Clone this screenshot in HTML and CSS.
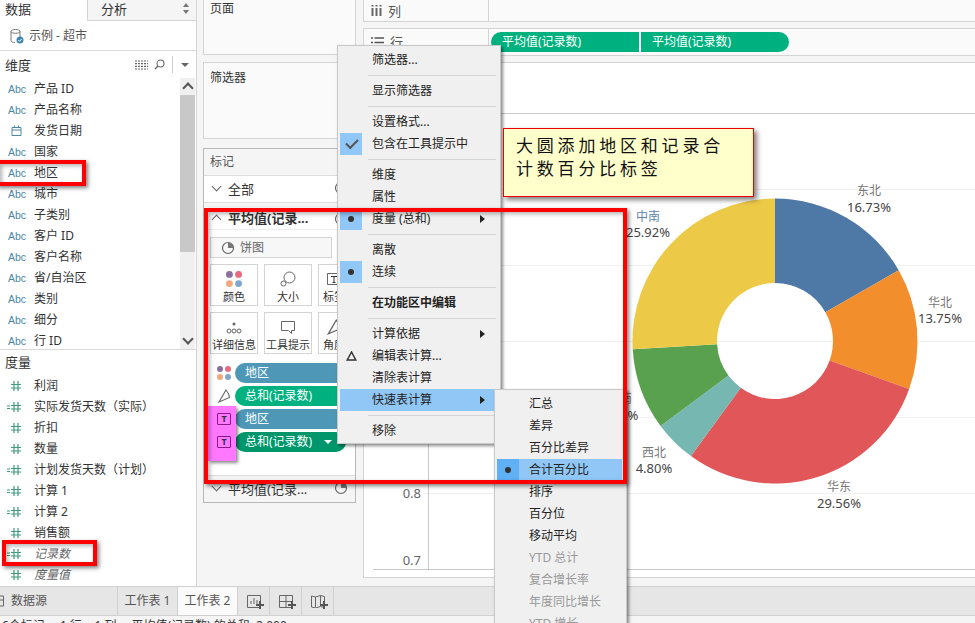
FILE: index.html
```html
<!DOCTYPE html>
<html lang="zh-CN">
<head>
    <meta charset="UTF-8">
    <meta name="viewport" content="width=device-width, initial-scale=1.0">
    <title>工作表 2</title>
    <link rel="stylesheet" href="styles.css">
</head>
<body>
    <svg class="sprite" width="0" height="0">
        <symbol id="num" viewBox="0 0 22 12">
            <path d="M14 1v10M18 1v10M11 4.5h10M11 8h10" fill="none" stroke="#3f9b7d" stroke-width="1.2"/>
        </symbol>
        <symbol id="num-calc" viewBox="0 0 22 12">
            <path d="M14 1v10M18 1v10M11 4.5h10M11 8h10M7 5h3M7 7.5h3" fill="none" stroke="#3f9b7d" stroke-width="1.2"/>
        </symbol>
        <symbol id="pie" viewBox="0 0 14 14">
            <circle cx="7" cy="7" r="5.5" fill="none" stroke="#666" stroke-width="1.2"/>
            <path d="M7 7V1.5A5.5 5.5 0 0 1 12.5 7z" fill="#777"/>
        </symbol>
        <symbol id="dots" viewBox="0 0 14 14">
            <circle cx="3" cy="3" r="3" fill="#8b6f9e"/>
            <circle cx="11" cy="3" r="3" fill="#ea6b80"/>
            <circle cx="3" cy="11" r="3" fill="#f2a77c"/>
            <circle cx="11" cy="11" r="3" fill="#7ea6cf"/>
        </symbol>
        <symbol id="angle" viewBox="0 0 14 14">
            <path d="M2 13L9 1q3 3.5 3.5 7.5z" fill="none" stroke="#666" stroke-width="1.1"/>
        </symbol>
        <symbol id="plus" viewBox="0 0 8 8">
            <path d="M4 0v8M0 4h8" stroke="#555" stroke-width="2"/>
        </symbol>
    </svg>

    <div class="app">
        <div class="workspace">
            <aside class="data-pane">
                <div class="pane-tabs">
                    <span class="pane-tab active">数据</span>
                    <span class="pane-tab">分析<i class="updown"></i></span>
                </div>
                <div class="source-row">
                    <svg width="16" height="16" viewBox="0 0 16 16">
                        <path d="M2 3.5C2 .8 11 .8 11 3.5V9M2 3.5c0 2.4 9 2.4 9 0M2 3.5v9c0 1.3 2 2 4 2" fill="none" stroke="#777" stroke-width="1"/>
                        <circle cx="11" cy="12" r="3.5" fill="#3d87b5"/>
                        <path d="M9.3 12l1.3 1.3 2-2.3" fill="none" stroke="#fff" stroke-width="1"/>
                    </svg>
                    <span>示例 - 超市</span>
                </div>
                <div class="field-head dim-head">
                    <span>维度</span>
                    <div class="head-tools">
                        <svg width="13" height="10" viewBox="0 0 13 10">
                            <path d="M0 1h13M0 3.7h13M0 6.3h13M0 9h13" stroke="#666" stroke-dasharray="2 1" stroke-width="1.2"/>
                        </svg>
                        <svg width="11" height="11" viewBox="0 0 11 11">
                            <circle cx="6.5" cy="4.5" r="3.5" fill="none" stroke="#666" stroke-width="1.1"/>
                            <path d="M4 7L1 10" stroke="#666" stroke-width="1.4"/>
                        </svg>
                        <i class="tool-rule"></i>
                        <i class="tool-caret"></i>
                    </div>
                </div>
                <div class="dim-body">
                    <ul class="field-list">
                        <li><span class="type abc">Abc</span>产品 ID</li>
                        <li><span class="type abc">Abc</span>产品名称</li>
                        <li><span class="type"><svg class="date" width="11" height="11" viewBox="0 0 11 11"><path d="M1 2.5h9v8H1zM1 5h9M3.5 .5v2M7.5 .5v2" fill="none" stroke="#4b86a6"/></svg></span>发货日期</li>
                        <li><span class="type abc">Abc</span>国家</li>
                        <li><span class="type abc">Abc</span>地区</li>
                        <li><span class="type abc">Abc</span>城市</li>
                        <li><span class="type abc">Abc</span>子类别</li>
                        <li><span class="type abc">Abc</span>客户 ID</li>
                        <li><span class="type abc">Abc</span>客户名称</li>
                        <li><span class="type abc">Abc</span>省/自治区</li>
                        <li><span class="type abc">Abc</span>类别</li>
                        <li><span class="type abc">Abc</span>细分</li>
                        <li><span class="type abc">Abc</span>行 ID</li>
                    </ul>
                    <div class="scrollbar">
                        <span class="scroll-btn up"></span>
                        <span class="scroll-thumb"></span>
                        <span class="scroll-btn down"></span>
                    </div>
                </div>
                <div class="field-head measure-head">度量</div>
                <ul class="field-list">
                    <li><span class="type"><svg width="22" height="12"><use href="#num"/></svg></span>利润</li>
                    <li><span class="type"><svg width="22" height="12"><use href="#num-calc"/></svg></span>实际发货天数（实际）</li>
                    <li><span class="type"><svg width="22" height="12"><use href="#num"/></svg></span>折扣</li>
                    <li><span class="type"><svg width="22" height="12"><use href="#num"/></svg></span>数量</li>
                    <li><span class="type"><svg width="22" height="12"><use href="#num-calc"/></svg></span>计划发货天数（计划）</li>
                    <li><span class="type"><svg width="22" height="12"><use href="#num-calc"/></svg></span>计算 1</li>
                    <li><span class="type"><svg width="22" height="12"><use href="#num-calc"/></svg></span>计算 2</li>
                    <li><span class="type"><svg width="22" height="12"><use href="#num"/></svg></span>销售额</li>
                    <li class="generated"><span class="type"><svg width="22" height="12"><use href="#num-calc"/></svg></span><em>记录数</em></li>
                    <li class="generated"><span class="type"><svg width="22" height="12"><use href="#num"/></svg></span><em>度量值</em></li>
                </ul>
            </aside>

            <section class="cards-col">
                <div class="card page-card">页面</div>
                <div class="card filter-card">筛选器</div>
                <div class="card marks-card">
                    <div class="marks-title">标记</div>
                    <div class="marks-row"><i class="chev down"></i><span>全部</span><svg class="row-pie" width="14" height="14"><use href="#pie"/></svg></div>
                    <div class="marks-gap"></div>
                    <div class="marks-row open"><i class="chev up"></i><span>平均值(记录...</span><svg class="row-pie" width="14" height="14"><use href="#pie"/></svg></div>
                    <div class="marks-body">
                        <div class="mark-type"><svg width="14" height="14"><use href="#pie"/></svg><span>饼图</span></div>
                        <div class="mark-grid">
                            <div class="mark-btn"><svg width="16" height="16"><use href="#dots"/></svg>颜色</div>
                            <div class="mark-btn">
                                <svg width="16" height="16" viewBox="0 0 16 16"><circle cx="9.5" cy="6.5" r="5.5" fill="none" stroke="#666"/><circle cx="3.5" cy="12.5" r="2.5" fill="#fff" stroke="#666"/></svg>
                                大小
                            </div>
                            <div class="mark-btn">
                                <svg width="16" height="16" viewBox="0 0 16 16"><path d="M1.5 2.5h13v11h-13z" fill="none" stroke="#666"/><path d="M5 5.5h6M8 5.5v6M6.5 11.5h3" fill="none" stroke="#333"/></svg>
                                标签
                            </div>
                            <div class="mark-btn">
                                <svg width="16" height="16" viewBox="0 0 16 16"><circle cx="8" cy="5" r="1.5" fill="#666"/><circle cx="3" cy="12" r="2" fill="none" stroke="#666"/><circle cx="8" cy="12" r="2" fill="none" stroke="#666"/><circle cx="13" cy="12" r="2" fill="none" stroke="#666"/></svg>
                                详细信息
                            </div>
                            <div class="mark-btn">
                                <svg width="16" height="16" viewBox="0 0 16 16"><path d="M1.5 2.5h13v9h-3v3l-3-3h-7z" fill="none" stroke="#666"/></svg>
                                工具提示
                            </div>
                            <div class="mark-btn"><svg width="16" height="16"><use href="#angle"/></svg>角度</div>
                        </div>
                        <div class="encodings">
                            <div class="encoding"><svg width="14" height="14"><use href="#dots"/></svg><span class="pill dim">地区</span></div>
                            <div class="encoding"><svg width="14" height="14"><use href="#angle"/></svg><span class="pill measure">总和(记录数)</span></div>
                            <div class="encoding"><span class="label-icon">T</span><span class="pill dim">地区</span></div>
                            <div class="encoding"><span class="label-icon">T</span><span class="pill measure dark">总和(记录数)<i class="pill-caret"></i></span></div>
                        </div>
                    </div>
                    <div class="marks-row last"><i class="chev down"></i><span>平均值(记录...</span><svg class="row-pie" width="14" height="14"><use href="#pie"/></svg></div>
                </div>
            </section>

            <section class="main-col">
                <div class="shelf col-shelf">
                    <div class="shelf-name">
                        <svg width="11" height="11" viewBox="0 0 11 11"><path d="M1.5 3v8M5.5 3v8M9.5 3v8M1.5 0v1.5M5.5 0v1.5M9.5 0v1.5" stroke="#666" stroke-width="2"/></svg>
                        <span>列</span>
                    </div>
                </div>
                <div class="shelf row-shelf">
                    <div class="shelf-name">
                        <svg width="13" height="11" viewBox="0 0 13 11"><path d="M0 1h2M3.5 1H13M0 5.5h2M3.5 5.5H13M0 10h2M3.5 10H13" stroke="#555" stroke-width="1.6"/></svg>
                        <span>行</span>
                    </div>
                    <div class="shelf-pills">
                        <span class="shelf-pill first">平均值(记录数)</span>
                        <span class="shelf-pill second">平均值(记录数)</span>
                    </div>
                </div>
                <div class="view">
                    <div class="view-title"></div>
                    <svg class="plot" viewBox="364 114 611 464">
                        <path class="grid" d="M428 189.5H975M428 265.5H975M428 341.5H975M428 417.5H975M423 493.5H975"/>
                        <path class="axis" d="M428.5 114V569M373 569.5H975"/>
                        <text class="tick" x="421" y="498">0.8</text>
                        <text class="tick" x="421" y="565">0.7</text>
                        <path fill="#4e79a7" d="M775 198.5A142.5 142.5 0 0 1 898.69 270.25L825.34 312.2A58 58 0 0 0 775 283Z"/>
                        <path fill="#f28e2b" d="M898.69 270.25A142.5 142.5 0 0 1 909.14 389.11L829.6 360.58A58 58 0 0 0 825.34 312.2Z"/>
                        <path fill="#e15759" d="M909.14 389.11A142.5 142.5 0 0 1 690.95 456.07L740.79 387.84A58 58 0 0 0 829.6 360.58Z"/>
                        <path fill="#76b7b2" d="M690.95 456.07A142.5 142.5 0 0 1 660.56 425.92L728.42 375.56A58 58 0 0 0 740.79 387.84Z"/>
                        <path fill="#59a14f" d="M660.56 425.92A142.5 142.5 0 0 1 632.74 349.24L717.1 344.35A58 58 0 0 0 728.42 375.56Z"/>
                        <path fill="#edc948" d="M632.74 349.24A142.5 142.5 0 0 1 775 198.5V283A58 58 0 0 0 717.1 344.35Z"/>
                        <g class="slice-labels">
                            <text class="name" x="869" y="195">东北</text><text x="869" y="212">16.73%</text>
                            <text class="name" x="940" y="307">华北</text><text x="940" y="323">13.75%</text>
                            <text class="name" x="839" y="491">华东</text><text x="839" y="508">29.56%</text>
                            <text class="name" x="654" y="457">西北</text><text x="654" y="473">4.80%</text>
                            <text class="name" x="620" y="403">西南</text><text x="620" y="420">9.24%</text>
                            <text class="name china" x="648" y="221">中南</text><text x="648" y="237">25.92%</text>
                        </g>
                    </svg>
                </div>
            </section>
        </div>

        <nav class="tab-bar">
            <div class="tab source-tab">
                <svg width="8" height="12" viewBox="0 0 8 12"><path d="M0 1h6.5v10H0M0 5h6.5" fill="none" stroke="#666"/></svg>
                <span>数据源</span>
            </div>
            <div class="tab sheet">工作表 1</div>
            <div class="tab sheet current">工作表 2</div>
            <div class="tab add">
                <svg width="14" height="13" viewBox="0 0 14 13"><path d="M.5.5h13v12H.5zM4 9V6M7 9V3M10 9V5" fill="none" stroke="#666"/></svg>
                <svg class="plus" width="8" height="8"><use href="#plus"/></svg>
            </div>
            <div class="tab add">
                <svg width="14" height="13" viewBox="0 0 14 13"><path d="M.5.5h13v12H.5zM7 .5v12M.5 6.5h13" fill="none" stroke="#666"/></svg>
                <svg class="plus" width="8" height="8"><use href="#plus"/></svg>
            </div>
            <div class="tab add">
                <svg width="14" height="13" viewBox="0 0 14 13"><path d="M.5 1l4 1 5-1.5 4 1v11l-4-1-5 1.5-4-1zM4.5 2v10.5M9.5 .5v10.5" fill="none" stroke="#666"/></svg>
                <svg class="plus" width="8" height="8"><use href="#plus"/></svg>
            </div>
        </nav>
        <footer class="status-bar">
            <span>6个标记</span><span>1 行 x 1 列</span><span>平均值(记录数) 的总和: 2.000</span>
        </footer>

        <!-- overlays -->
        <ul class="menu field-menu">
            <li>筛选器...</li>
            <li class="sep"></li>
            <li>显示筛选器</li>
            <li class="sep"></li>
            <li>设置格式...</li>
            <li class="on"><i class="mark check"></i>包含在工具提示中</li>
            <li class="sep"></li>
            <li>维度</li>
            <li>属性</li>
            <li class="on"><i class="mark dot"></i>度量 (总和)<i class="arrow"></i></li>
            <li class="sep"></li>
            <li>离散</li>
            <li class="on"><i class="mark dot"></i>连续</li>
            <li class="sep"></li>
            <li class="strong">在功能区中编辑</li>
            <li class="sep"></li>
            <li>计算依据<i class="arrow"></i></li>
            <li><svg class="delta" width="11" height="10" viewBox="0 0 11 10"><path d="M5.5 1L1.2 9h8.6z" fill="none" stroke="#333" stroke-width="1.5"/></svg>编辑表计算...</li>
            <li>清除表计算</li>
            <li class="hover">快速表计算<i class="arrow"></i></li>
            <li class="sep"></li>
            <li>移除</li>
        </ul>
        <ul class="menu quick-menu">
            <li>汇总</li>
            <li>差异</li>
            <li>百分比差异</li>
            <li class="on picked"><i class="mark dot"></i>合计百分比</li>
            <li>排序</li>
            <li>百分位</li>
            <li>移动平均</li>
            <li class="off">YTD 总计</li>
            <li class="off">复合增长率</li>
            <li class="off">年度同比增长</li>
            <li class="off">YTD 增长</li>
        </ul>

        <div class="pink-flag"></div>
        <div class="callout">大圆添加地区和记录合<br>计数百分比标签</div>
        <div class="hilite hilite-region"></div>
        <div class="hilite hilite-count"></div>
        <div class="hilite hilite-marks"></div>
    </div>
</body>
</html>
```

FILE: styles.css
```css
* {
  box-sizing: border-box;
}

html, body {
  margin: 0;
  height: 100%;
  overflow: hidden;
}

body {
  font-family: "Noto Sans", "Noto Sans CJK SC", sans-serif;
  font-size: 12px;
  line-height: 16px;
  color: #333;
  background-color: #f5f5f5;
}

ul {
  list-style: none;
  margin: 0;
  padding: 0;
}

.sprite {
  position: absolute;
}

.app {
  position: relative;
  width: 975px;
  height: 623px;
  overflow: hidden;
}

.workspace {
  display: flex;
  height: 586px;
}

/* data pane */
.data-pane {
  width: 197px;
  flex-shrink: 0;
  background-color: #fff;
  border-right: 1px solid #d4d4d4;
  overflow: hidden;
}

.pane-tabs {
  display: flex;
  height: 21px;
}

.pane-tab {
  font-size: 13px;
  line-height: 19px;
  padding-left: 5px;
  width: 87px;
}

.pane-tab + .pane-tab {
  flex: 1;
  position: relative;
  padding-left: 13px;
  background-color: #f5f5f5;
  border-left: 1px solid #d4d4d4;
  border-bottom: 1px solid #d4d4d4;
}

.updown {
  position: absolute;
  right: 7px;
  top: 3px;
  width: 6px;
  height: 11px;
}

.updown::before,
.updown::after {
  content: "";
  position: absolute;
  left: 0;
  border-left: 3px solid transparent;
  border-right: 3px solid transparent;
}

.updown::before {
  top: 0;
  border-bottom: 4px solid #777;
}

.updown::after {
  bottom: 0;
  border-top: 4px solid #777;
}

.source-row {
  display: flex;
  align-items: center;
  gap: 4px;
  height: 30px;
  padding-left: 9px;
  color: #555;
  border-bottom: 1px solid #d9d9d9;
}

.field-head {
  font-size: 13px;
  padding-left: 5px;
  display: flex;
  align-items: center;
}

.dim-head {
  height: 27px;
  justify-content: space-between;
}

.measure-head {
  height: 26px;
  border-top: 1px solid #d9d9d9;
  padding-bottom: 2px;
}

.head-tools {
  display: flex;
  align-items: center;
  padding-right: 7px;
}

.head-tools svg:first-child {
  margin-right: 6px;
}

.tool-rule {
  width: 1px;
  height: 17px;
  background-color: #ccc;
  margin: 0 8px 0 7px;
}

.tool-caret {
  border-left: 4px solid transparent;
  border-right: 4px solid transparent;
  border-top: 4px solid #666;
}

.dim-body {
  display: flex;
  height: 271px;
  overflow: hidden;
}

.field-list {
  flex: 1;
}

.field-list li {
  display: flex;
  align-items: center;
  height: 21px;
  white-space: nowrap;
}

.type {
  width: 34px;
  flex-shrink: 0;
  display: flex;
}

.abc {
  font-family: "Liberation Sans", sans-serif;
  font-size: 10.5px;
  color: #4b86a6;
  padding-left: 8px;
}

.date {
  margin-left: 11px;
}

.generated em {
  color: #666;
}

.scrollbar {
  width: 15px;
  margin-right: 1px;
  display: flex;
  flex-direction: column;
  background-color: #f0f0f0;
}

.scroll-btn {
  height: 17px;
  flex-shrink: 0;
  position: relative;
}

.scroll-btn::after {
  content: "";
  position: absolute;
  left: 4px;
  top: 6px;
  width: 6px;
  height: 6px;
  border-left: 2px solid #555;
  border-top: 2px solid #555;
  transform: rotate(45deg);
}

.scroll-btn.down {
  margin-top: auto;
}

.scroll-btn.down::after {
  top: 3px;
  transform: rotate(225deg);
}

.scroll-thumb {
  height: 157px;
  background-color: #c8c8c8;
}

/* cards column */
.cards-col {
  width: 166px;
  flex-shrink: 0;
  padding: 0 7px 0 6px;
}

.card {
  background-color: #fafafa;
  border: 1px solid #d4d4d4;
  padding: 0 6px;
}

.page-card {
  height: 55px;
  border-top: 0;
  padding-top: 1px;
  margin-bottom: 7px;
}

.filter-card {
  height: 77px;
  padding-top: 7px;
  margin-bottom: 9px;
}

.marks-card {
  height: 355px;
  padding: 0;
  background-color: #fff;
  border-color: #b8b8b8;
  overflow: hidden;
}

.marks-title {
  height: 27px;
  line-height: 26px;
  padding-left: 6px;
  color: #555;
  background-color: #f5f5f5;
  border-bottom: 1px solid #ddd;
}

.marks-row {
  display: flex;
  align-items: center;
  height: 26px;
  padding-left: 24px;
  font-size: 13px;
  position: relative;
  white-space: nowrap;
}

.marks-row.open {
  font-weight: 700;
  height: 22px;
}

.marks-row.last {
  height: 27px;
  background-color: #f5f5f5;
  border-top: 1px solid #ddd;
}

.row-pie {
  position: absolute;
  left: 130px;
  top: 5px;
}

.marks-gap {
  height: 5px;
  background-color: #f5f5f5;
  border-top: 1px solid #ddd;
}

.chev {
  position: absolute;
  left: 9px;
  width: 7px;
  height: 7px;
  border-right: 1px solid #666;
  border-bottom: 1px solid #666;
}

.chev.down {
  top: 7px;
  transform: rotate(45deg);
}

.chev.up {
  top: 9px;
  transform: rotate(225deg);
}

.marks-body {
  height: 246px;
  padding: 7px 0 0 6px;
  border-top: 1px solid #eee;
}

.mark-type {
  display: flex;
  align-items: center;
  gap: 5px;
  width: 122px;
  height: 21px;
  padding-left: 10px;
  color: #666;
  background-color: #f7f7f7;
  border: 1px solid #d4d4d4;
}

.mark-grid {
  display: grid;
  grid-template-columns: 48px 48px 32px;
  grid-auto-rows: 42px;
  gap: 6px;
  margin-top: 6px;
}

.mark-btn {
  display: flex;
  flex-direction: column;
  align-items: center;
  justify-content: flex-end;
  gap: 2px;
  font-size: 11px;
  line-height: 15px;
  white-space: nowrap;
  padding-bottom: 1px;
  background-color: #fff;
  border: 1px solid #d4d4d4;
}

.encodings {
  margin-top: 9px;
  display: flex;
  flex-direction: column;
  gap: 3px;
}

.encoding {
  display: flex;
  align-items: center;
  height: 20px;
}

.encoding > svg,
.label-icon {
  width: 14px;
  margin: 0 4px 0 7px;
}

.label-icon {
  height: 12px;
  font-size: 9px;
  line-height: 10px;
  font-weight: 700;
  text-align: center;
  color: #333;
  border: 1px solid #8a1a8a;
  border-radius: 1px;
  position: relative;
  z-index: 2;
}

.pill {
  width: 111px;
  height: 20px;
  line-height: 19px;
  padding-left: 10px;
  color: #fff;
  border-radius: 10px;
  position: relative;
  flex-shrink: 0;
}

.pill.dim {
  background-color: #4e97b7;
}

.pill.measure {
  background-color: #00b180;
}

.pill.dark {
  background-color: #00966c;
}

.pill-caret {
  position: absolute;
  left: 89px;
  top: 8px;
  border-left: 4px solid transparent;
  border-right: 4px solid transparent;
  border-top: 4px solid #fff;
}

/* shelves and view */
.main-col {
  flex: 1;
  min-width: 0;
}

.shelf {
  display: flex;
  background-color: #fafafa;
  border: 1px solid #d4d4d4;
  border-right: 0;
}

.col-shelf {
  height: 22px;
  border-top: 0;
  margin-bottom: 6px;
}

.row-shelf {
  height: 28px;
  margin-bottom: 6px;
}

.shelf-name {
  display: flex;
  align-items: center;
  gap: 6px;
  width: 125px;
  padding-left: 7px;
  border-right: 1px solid #d4d4d4;
  font-size: 13px;
  color: #555;
}

.shelf-pills {
  display: flex;
  gap: 2px;
  padding: 3px 0 0 2px;
}

.shelf-pill {
  width: 148px;
  height: 20px;
  line-height: 19px;
  padding-left: 11px;
  color: #fff;
  background-color: #00b180;
}

.shelf-pill.first {
  border-radius: 10px 0 0 10px;
}

.shelf-pill.second {
  border-radius: 0 10px 10px 0;
}

.view {
  height: 516px;
  background-color: #fff;
  border: 1px solid #d4d4d4;
  border-right: 0;
}

.view-title {
  height: 51px;
  border-bottom: 1px solid #ccc;
}

.plot {
  display: block;
  width: 611px;
  height: 464px;
}

.grid {
  fill: none;
  stroke: #f0f0f0;
}

.axis {
  fill: none;
  stroke: #c8c8c8;
}

.tick {
  font-size: 13px;
  fill: #666;
  text-anchor: end;
}

.slice-labels text {
  font-size: 13px;
  fill: #444;
  text-anchor: middle;
}

.slice-labels .name {
  font-size: 12px;
  fill: #777;
}

.slice-labels .china {
  fill: #5b87b0;
}

/* bottom bars */
.tab-bar {
  display: flex;
  height: 30px;
  background-color: #e6e6e6;
  border-top: 1px solid #d0d0d0;
  border-bottom: 1px solid #d0d0d0;
}

.tab {
  display: flex;
  align-items: center;
  border-right: 1px solid #d0d0d0;
  font-size: 12px;
  color: #555;
}

.source-tab {
  width: 121px;
  gap: 6px;
  margin-left: -3px;
}

.sheet {
  width: 60px;
  justify-content: center;
}

.current {
  background-color: #fafafa;
}

.add {
  width: 32px;
  position: relative;
  padding-left: 9px;
}

.plus {
  position: absolute;
  left: 18px;
  top: 14px;
}

.status-bar {
  display: flex;
  gap: 15px;
  height: 7px;
  padding: 3px 0 0 2px;
  font-size: 12px;
  line-height: 14px;
  overflow: hidden;
}

/* overlays */
.menu {
  position: absolute;
  color: #222;
  background-color: #f0f0f0;
  border: 1px solid #c8c8c8;
  box-shadow: 2px 2px 3px rgba(0, 0, 0, 0.45);
}

.menu li {
  display: flex;
  align-items: center;
  height: 22px;
  position: relative;
  white-space: nowrap;
}

.field-menu {
  left: 337px;
  top: 45px;
  width: 164px;
  padding: 3px 2px 1px;
}

.field-menu li {
  padding-left: 32px;
}

.field-menu li.sep {
  height: 9px;
  padding: 0;
  margin: 0 2px 0 28px;
}

.field-menu li.sep::after {
  content: "";
  width: 100%;
  height: 1px;
  background-color: #d4d4d4;
}

.field-menu .strong {
  font-weight: 700;
}

.field-menu .hover {
  background-color: #90c7f6;
}

.mark {
  position: absolute;
  left: 0;
  top: 0;
  width: 22px;
  height: 22px;
  background-color: #90c7f6;
}

.dot::after {
  content: "";
  position: absolute;
  left: 8px;
  top: 8px;
  width: 6px;
  height: 6px;
  border-radius: 50%;
  background-color: #333;
}

.check::after {
  content: "";
  position: absolute;
  left: 6px;
  top: 6px;
  width: 10px;
  height: 5px;
  border-left: 2px solid #555;
  border-bottom: 2px solid #555;
  transform: rotate(-45deg);
}

.delta {
  position: absolute;
  left: 6px;
  top: 6px;
}

.arrow {
  position: absolute;
  right: 13px;
  top: 7px;
  border-top: 4px solid transparent;
  border-bottom: 4px solid transparent;
  border-left: 5px solid #222;
}

.quick-menu {
  left: 494px;
  top: 389px;
  width: 133px;
  height: 250px;
  padding: 3px 4px 0 2px;
}

.quick-menu li {
  padding-left: 32px;
}

.quick-menu .off {
  color: #999;
}

.quick-menu .picked {
  background-color: #90c7f6;
}

.quick-menu .picked .mark {
  background-color: #5fb0f5;
}

.pink-flag {
  position: absolute;
  left: 208px;
  top: 406px;
  width: 28px;
  height: 55px;
  background-color: #ff78ff;
  box-shadow: 2px 2px 3px rgba(0, 0, 0, 0.45);
}

.callout {
  position: absolute;
  left: 503px;
  top: 128px;
  width: 251px;
  height: 69px;
  padding: 5px 0 0 12px;
  font-size: 17px;
  line-height: 23px;
  letter-spacing: 3.8px;
  color: #111;
  background-color: #ffffcc;
  border: 1px solid #e00;
  box-shadow: 3px 3px 5px rgba(0, 0, 0, 0.5);
}

.hilite {
  position: absolute;
  border: 4px solid #f00;
  box-shadow: 2px 2px 4px rgba(0, 0, 0, 0.5), inset 2px 2px 4px rgba(0, 0, 0, 0.3);
}

.hilite-region {
  left: -4px;
  top: 160px;
  width: 90px;
  height: 26px;
}

.hilite-count {
  left: 2px;
  top: 540px;
  width: 95px;
  height: 26px;
}

.hilite-marks {
  left: 204px;
  top: 208px;
  width: 423px;
  height: 276px;
}
```
